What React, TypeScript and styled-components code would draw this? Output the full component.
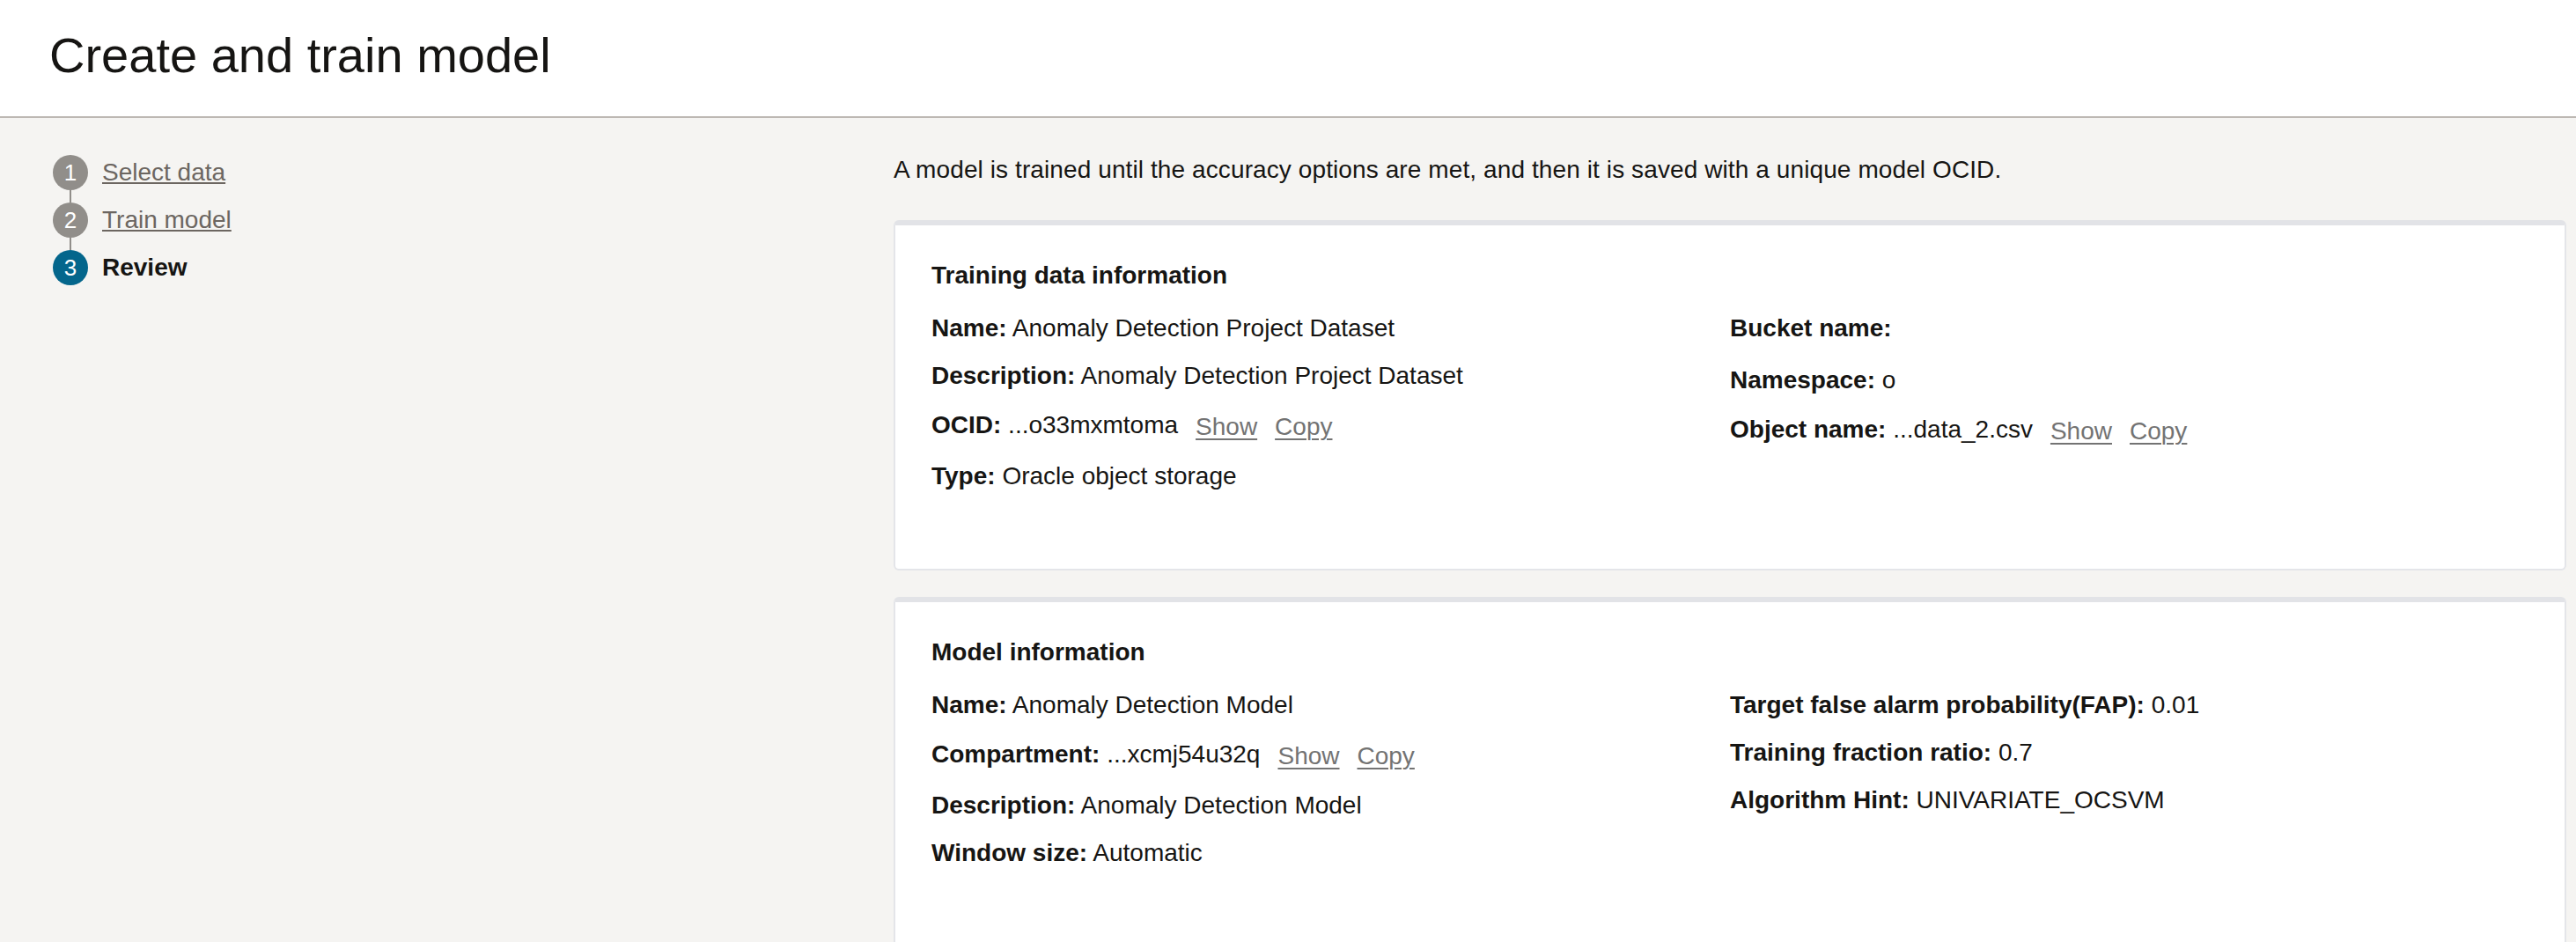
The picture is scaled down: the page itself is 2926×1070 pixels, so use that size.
import React from 'react'
import styled, { createGlobalStyle } from 'styled-components'

const GlobalStyle = createGlobalStyle`
  html, body {
    margin: 0;
    padding: 0;
    background: #f5f4f2;
    font-family: "Liberation Sans", Arial, sans-serif;
    color: #161513;
  }
`

const Page = styled.div`
  min-height: 100vh;
  background: #f5f4f2;
`

const Header = styled.header`
  background: #ffffff;
  border-bottom: 2px solid #bdb8b3;
  padding: 31px 56px 37px;
`

const PageTitle = styled.h1`
  margin: 0;
  font-size: 56px;
  line-height: 64px;
  font-weight: 400;
  color: #161513;
`

const Body = styled.div`
  display: grid;
  grid-template-columns: 955px 1fr;
  padding: 39px 11px 0 60px;
`

const StepList = styled.ol`
  list-style: none;
  margin: 3px 0 0;
  padding: 0;
  display: flex;
  flex-direction: column;
  gap: 14px;
`

const Step = styled.li`
  display: flex;
  align-items: center;
  gap: 16px;
  height: 40px;
`

const StepBadge = styled.span<{ $active?: boolean; $last?: boolean }>`
  position: relative;
  flex: none;
  width: 40px;
  height: 40px;
  border-radius: 50%;
  background: ${(p) => (p.$active ? '#04668c' : '#918e8a')};
  color: #ffffff;
  font-size: 26px;
  line-height: 40px;
  text-align: center;

  ${(p) =>
    !p.$last &&
    `
    &::after {
      content: '';
      position: absolute;
      left: 19px;
      top: 40px;
      width: 2px;
      height: 14px;
      background: #918e8a;
    }
  `}
`

const StepLink = styled.a`
  font-size: 28px;
  line-height: 40px;
  color: #6c6661;
  text-decoration: underline;
  text-decoration-thickness: 2px;
  text-underline-offset: 2px;
  cursor: pointer;
`

const StepCurrent = styled.span`
  font-size: 28px;
  line-height: 40px;
  font-weight: 700;
  color: #161513;
`

const Content = styled.main`
  display: flex;
  flex-direction: column;
`

const Intro = styled.p`
  margin: 0 0 37px;
  font-size: 28px;
  line-height: 40px;
  letter-spacing: 0.1px;
`

const Card = styled.section`
  background: #ffffff;
  border: 2px solid #e4e5e9;
  border-top: 6px solid #e2e3e7;
  border-radius: 6px;
  padding: 37px 41px 85px;
  margin-bottom: 30px;
`

const CardTitle = styled.h2`
  margin: 0 0 20px;
  font-size: 28px;
  line-height: 40px;
  font-weight: 700;
`

const Columns = styled.div`
  display: grid;
  grid-template-columns: 1fr 1fr;
`

const Column = styled.div`
  display: flex;
  flex-direction: column;
  gap: 14px;
`

const Row = styled.div<{ $tall?: boolean; $actions?: boolean }>`
  font-size: 28px;
  line-height: 40px;
  min-height: ${(p) => (p.$tall ? '45px' : '40px')};
  padding-top: ${(p) => (p.$actions ? '2px' : '0')};
  white-space: nowrap;
`

const Label = styled.span`
  font-weight: 700;
`

const Action = styled.a`
  display: inline-block;
  margin-left: 20px;
  padding-bottom: 2px;
  vertical-align: -2px;
  color: #737373;
  text-decoration: underline;
  text-decoration-thickness: 2px;
  text-underline-offset: 4px;
  cursor: pointer;
`

interface Field {
  label: string
  value: string
  actions?: boolean
  tall?: boolean
}

interface CardData {
  title: string
  left: Field[]
  right: Field[]
}

const steps = [
  { n: 1, label: 'Select data' },
  { n: 2, label: 'Train model' },
  { n: 3, label: 'Review' },
]

const cards: CardData[] = [
  {
    title: 'Training data information',
    left: [
      { label: 'Name:', value: 'Anomaly Detection Project Dataset' },
      { label: 'Description:', value: 'Anomaly Detection Project Dataset' },
      { label: 'OCID:', value: '...o33mxmtoma', actions: true },
      { label: 'Type:', value: 'Oracle object storage' },
    ],
    right: [
      { label: 'Bucket name:', value: '', tall: true },
      { label: 'Namespace:', value: 'o' },
      { label: 'Object name:', value: '...data_2.csv', actions: true },
    ],
  },
  {
    title: 'Model information',
    left: [
      { label: 'Name:', value: 'Anomaly Detection Model' },
      { label: 'Compartment:', value: '...xcmj54u32q', actions: true },
      { label: 'Description:', value: 'Anomaly Detection Model' },
      { label: 'Window size:', value: 'Automatic' },
    ],
    right: [
      { label: 'Target false alarm probability(FAP):', value: '0.01' },
      { label: 'Training fraction ratio:', value: '0.7' },
      { label: 'Algorithm Hint:', value: 'UNIVARIATE_OCSVM' },
    ],
  },
]

const FieldRow: React.FC<{ field: Field }> = ({ field }) => (
  <Row $tall={field.tall} $actions={field.actions}>
    <Label>{field.label}</Label> {field.value}
    {field.actions && (
      <>
        <Action>Show</Action>
        <Action>Copy</Action>
      </>
    )}
  </Row>
)

const App: React.FC = () => {
  return (
    <Page>
      <GlobalStyle />
      <Header>
        <PageTitle>Create and train model</PageTitle>
      </Header>
      <Body>
        <nav>
          <StepList>
            {steps.map((s, i) => (
              <Step key={s.n}>
                <StepBadge $active={i === steps.length - 1} $last={i === steps.length - 1}>
                  {s.n}
                </StepBadge>
                {i === steps.length - 1 ? <StepCurrent>{s.label}</StepCurrent> : <StepLink>{s.label}</StepLink>}
              </Step>
            ))}
          </StepList>
        </nav>
        <Content>
          <Intro>
            A model is trained until the accuracy options are met, and then it is saved with a unique model OCID.
          </Intro>
          {cards.map((card) => (
            <Card key={card.title}>
              <CardTitle>{card.title}</CardTitle>
              <Columns>
                <Column>
                  {card.left.map((f) => (
                    <FieldRow key={f.label} field={f} />
                  ))}
                </Column>
                <Column>
                  {card.right.map((f) => (
                    <FieldRow key={f.label} field={f} />
                  ))}
                </Column>
              </Columns>
            </Card>
          ))}
        </Content>
      </Body>
    </Page>
  )
}

export default App
